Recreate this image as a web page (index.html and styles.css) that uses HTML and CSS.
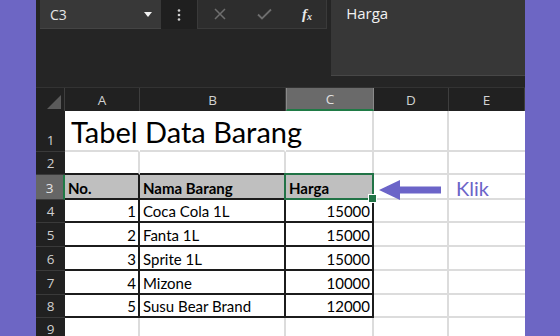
FILE: index.html
```html
<!DOCTYPE html>
<html>
<head>
<meta charset="utf-8">
<link rel="stylesheet" href="styles.css">
</head>
<body>
<div class="page">
  <div class="excel">
    <div class="top">
      <div class="toolbar">
        <div class="namebox">
          <span class="ref">C3</span>
          <svg class="caret" width="8" height="5" viewBox="0 0 8 5"><path d="M0 0H8L4 5Z" fill="#f2f2f2"/></svg>
        </div>
        <div class="dots">
          <svg width="4" height="12" viewBox="0 0 4 12"><circle cx="2" cy="1.5" r="1.3" fill="#cfcfcf"/><circle cx="2" cy="6" r="1.3" fill="#cfcfcf"/><circle cx="2" cy="10.5" r="1.3" fill="#cfcfcf"/></svg>
        </div>
        <div class="fbtns">
          <svg width="12" height="12" viewBox="0 0 12 12"><path d="M1 1L11 11M11 1L1 11" stroke="#6e6e6e" stroke-width="1.5"/></svg>
          <svg width="15" height="12" viewBox="0 0 15 12"><path d="M1 6.5L5 10.5L14 1.5" stroke="#6e6e6e" stroke-width="1.8" fill="none"/></svg>
          <span class="fx">f<sub>x</sub></span>
        </div>
      </div>
      <div class="formula">Harga</div>
    </div>
    <div class="grid">
      <div class="ch corner"><svg width="14" height="14" viewBox="0 0 14 14"><path d="M14 0V14H0Z" fill="#5b5b5b"/></svg></div>
      <div class="ch">A</div>
      <div class="ch">B</div>
      <div class="ch sel">C</div>
      <div class="ch">D</div>
      <div class="ch">E</div>

      <div class="rh">1</div>
      <div class="c nr"><span class="title">Tabel Data Barang</span></div>
      <div class="c nr"></div>
      <div class="c"></div>
      <div class="c"></div>
      <div class="c ne"></div>

      <div class="rh">2</div>
      <div class="c bb"></div>
      <div class="c bb"></div>
      <div class="c bb"></div>
      <div class="c"></div>
      <div class="c ne"></div>

      <div class="rh rsel">3</div>
      <div class="c t th">No.</div>
      <div class="c t th">Nama Barang</div>
      <div class="c t th active">Harga</div>
      <div class="c"></div>
      <div class="c ne"></div>

      <div class="rh">4</div>
      <div class="c t num">1</div>
      <div class="c t">Coca Cola 1L</div>
      <div class="c t num">15000</div>
      <div class="c"></div>
      <div class="c ne"></div>

      <div class="rh">5</div>
      <div class="c t num">2</div>
      <div class="c t">Fanta 1L</div>
      <div class="c t num">15000</div>
      <div class="c"></div>
      <div class="c ne"></div>

      <div class="rh">6</div>
      <div class="c t num">3</div>
      <div class="c t">Sprite 1L</div>
      <div class="c t num">15000</div>
      <div class="c"></div>
      <div class="c ne"></div>

      <div class="rh">7</div>
      <div class="c t num">4</div>
      <div class="c t">Mizone</div>
      <div class="c t num">10000</div>
      <div class="c"></div>
      <div class="c ne"></div>

      <div class="rh">8</div>
      <div class="c t num">5</div>
      <div class="c t">Susu Bear Brand</div>
      <div class="c t num">12000</div>
      <div class="c"></div>
      <div class="c ne"></div>

      <div class="rh">9</div>
      <div class="c"></div>
      <div class="c"></div>
      <div class="c"></div>
      <div class="c"></div>
      <div class="c ne"></div>
    </div>
  </div>
  <svg class="arrow" width="66" height="22" viewBox="0 0 66 22"><path d="M1 11L22 1V7.5H63V14.5H22V21Z" fill="#6b64c8"/></svg>
  <div class="klik">Klik</div>
</div>
</body>
</html>
```
FILE: styles.css
```css
* { box-sizing: border-box; }
html, body { margin: 0; padding: 0; }
body { background: #6d66c4; width: 560px; height: 336px; overflow: hidden; }
.page { position: relative; width: 560px; height: 336px; padding-left: 36px; }
.excel { width: 489px; height: 336px; background: #252525; overflow: hidden; }

.top { display: flex; height: 88px; border-bottom: 1px solid #333; }
.toolbar { width: 294px; display: flex; align-items: flex-start; padding-left: 4px; }
.namebox { width: 121px; height: 29px; background: #383838; display: flex; align-items: center; justify-content: space-between; padding: 0 9px 0 10px; border-bottom: 1px solid #444; }
.ref { font-family: "Open Sans", sans-serif; font-size: 14px; color: #e6e6e6; }
.dots { width: 36px; height: 29px; display: flex; align-items: center; justify-content: center; background: #1f1f1f; }
.fbtns { width: 130px; height: 29px; background: #2d2d2d; border: 1px solid #3a3a3a; border-top: none; display: flex; align-items: center; justify-content: space-between; padding: 0 14px 0 16px; }
.fx { font-family: "Liberation Serif", serif; font-style: italic; font-weight: bold; color: #e8e8e8; font-size: 15px; line-height: 1; }
.fx sub { font-size: 10px; vertical-align: -1px; }
.formula { width: 195px; height: 76px; background: #373737; margin-left: 3px; border-bottom: 1px solid #474747; font-family: "Open Sans", sans-serif; font-size: 15px; color: #f2f2f2; padding: 3px 0 0 15px; }

.grid { display: grid; grid-template-columns: 29px 75px 146px 88px 75px 76px; grid-template-rows: 23px 41px 23px 25px 23px 24px 24px 24px 23px 23px; }
.ch { background: #212121; border-right: 1px solid #3e3e3e; display: flex; align-items: center; justify-content: center; font-family: "Open Sans", sans-serif; font-size: 13.5px; color: #d2d2d2; }
.ch.corner { align-items: flex-end; justify-content: flex-end; padding: 0 3px 2px 0; }
.ch.sel { background: #6a6a6a; border-left: 1px solid #8a8a8a; border-right: 1px solid #8a8a8a; border-bottom: 2px solid #1f7a45; color: #e0e0e0; }
.rh { background: #212121; border-bottom: 1px solid #3a3a3a; display: flex; align-items: flex-end; justify-content: center; padding-bottom: 2px; font-family: "Open Sans", sans-serif; font-size: 13.5px; color: #cfcfcf; }
.rh.rsel { background: #666; border-right: 2px solid #1f7a45; color: #e4e4e4; }

.c { background: #fff; border-right: 2px solid #dcdcdc; border-bottom: 2px solid #dcdcdc; display: flex; align-items: flex-end; padding: 0 3px 1px 3px; font-family: "Lato", sans-serif; font-size: 15px; color: #000; white-space: nowrap; position: relative; }
.c.nr { border-right-color: #fff; }
.c.ne { border-right: none; }
.c.bb { border-bottom-color: #1c1c1c; }
.c.t { border-right-color: #1c1c1c; border-bottom-color: #1c1c1c; }
.c.th { background: #bfbfbf; font-weight: bold; }
.c.num { justify-content: flex-end; padding-right: 2px; }
.title { font-size: 29px; line-height: 1; padding-left: 3px; position: relative; z-index: 2; margin-bottom: 3px; }
.c.active::after { content: ""; position: absolute; left: -2px; top: -2px; right: -2px; bottom: -2px; border: 2px solid #217346; z-index: 3; }
.c.active::before { content: ""; position: absolute; right: -5px; bottom: -5px; width: 7px; height: 7px; background: #217346; border: 1px solid #fff; z-index: 4; }

.arrow { position: absolute; left: 378px; top: 179px; }
.klik { position: absolute; left: 456px; top: 176px; font-family: "Lato", sans-serif; font-size: 20px; color: #6b64c8; }
```
